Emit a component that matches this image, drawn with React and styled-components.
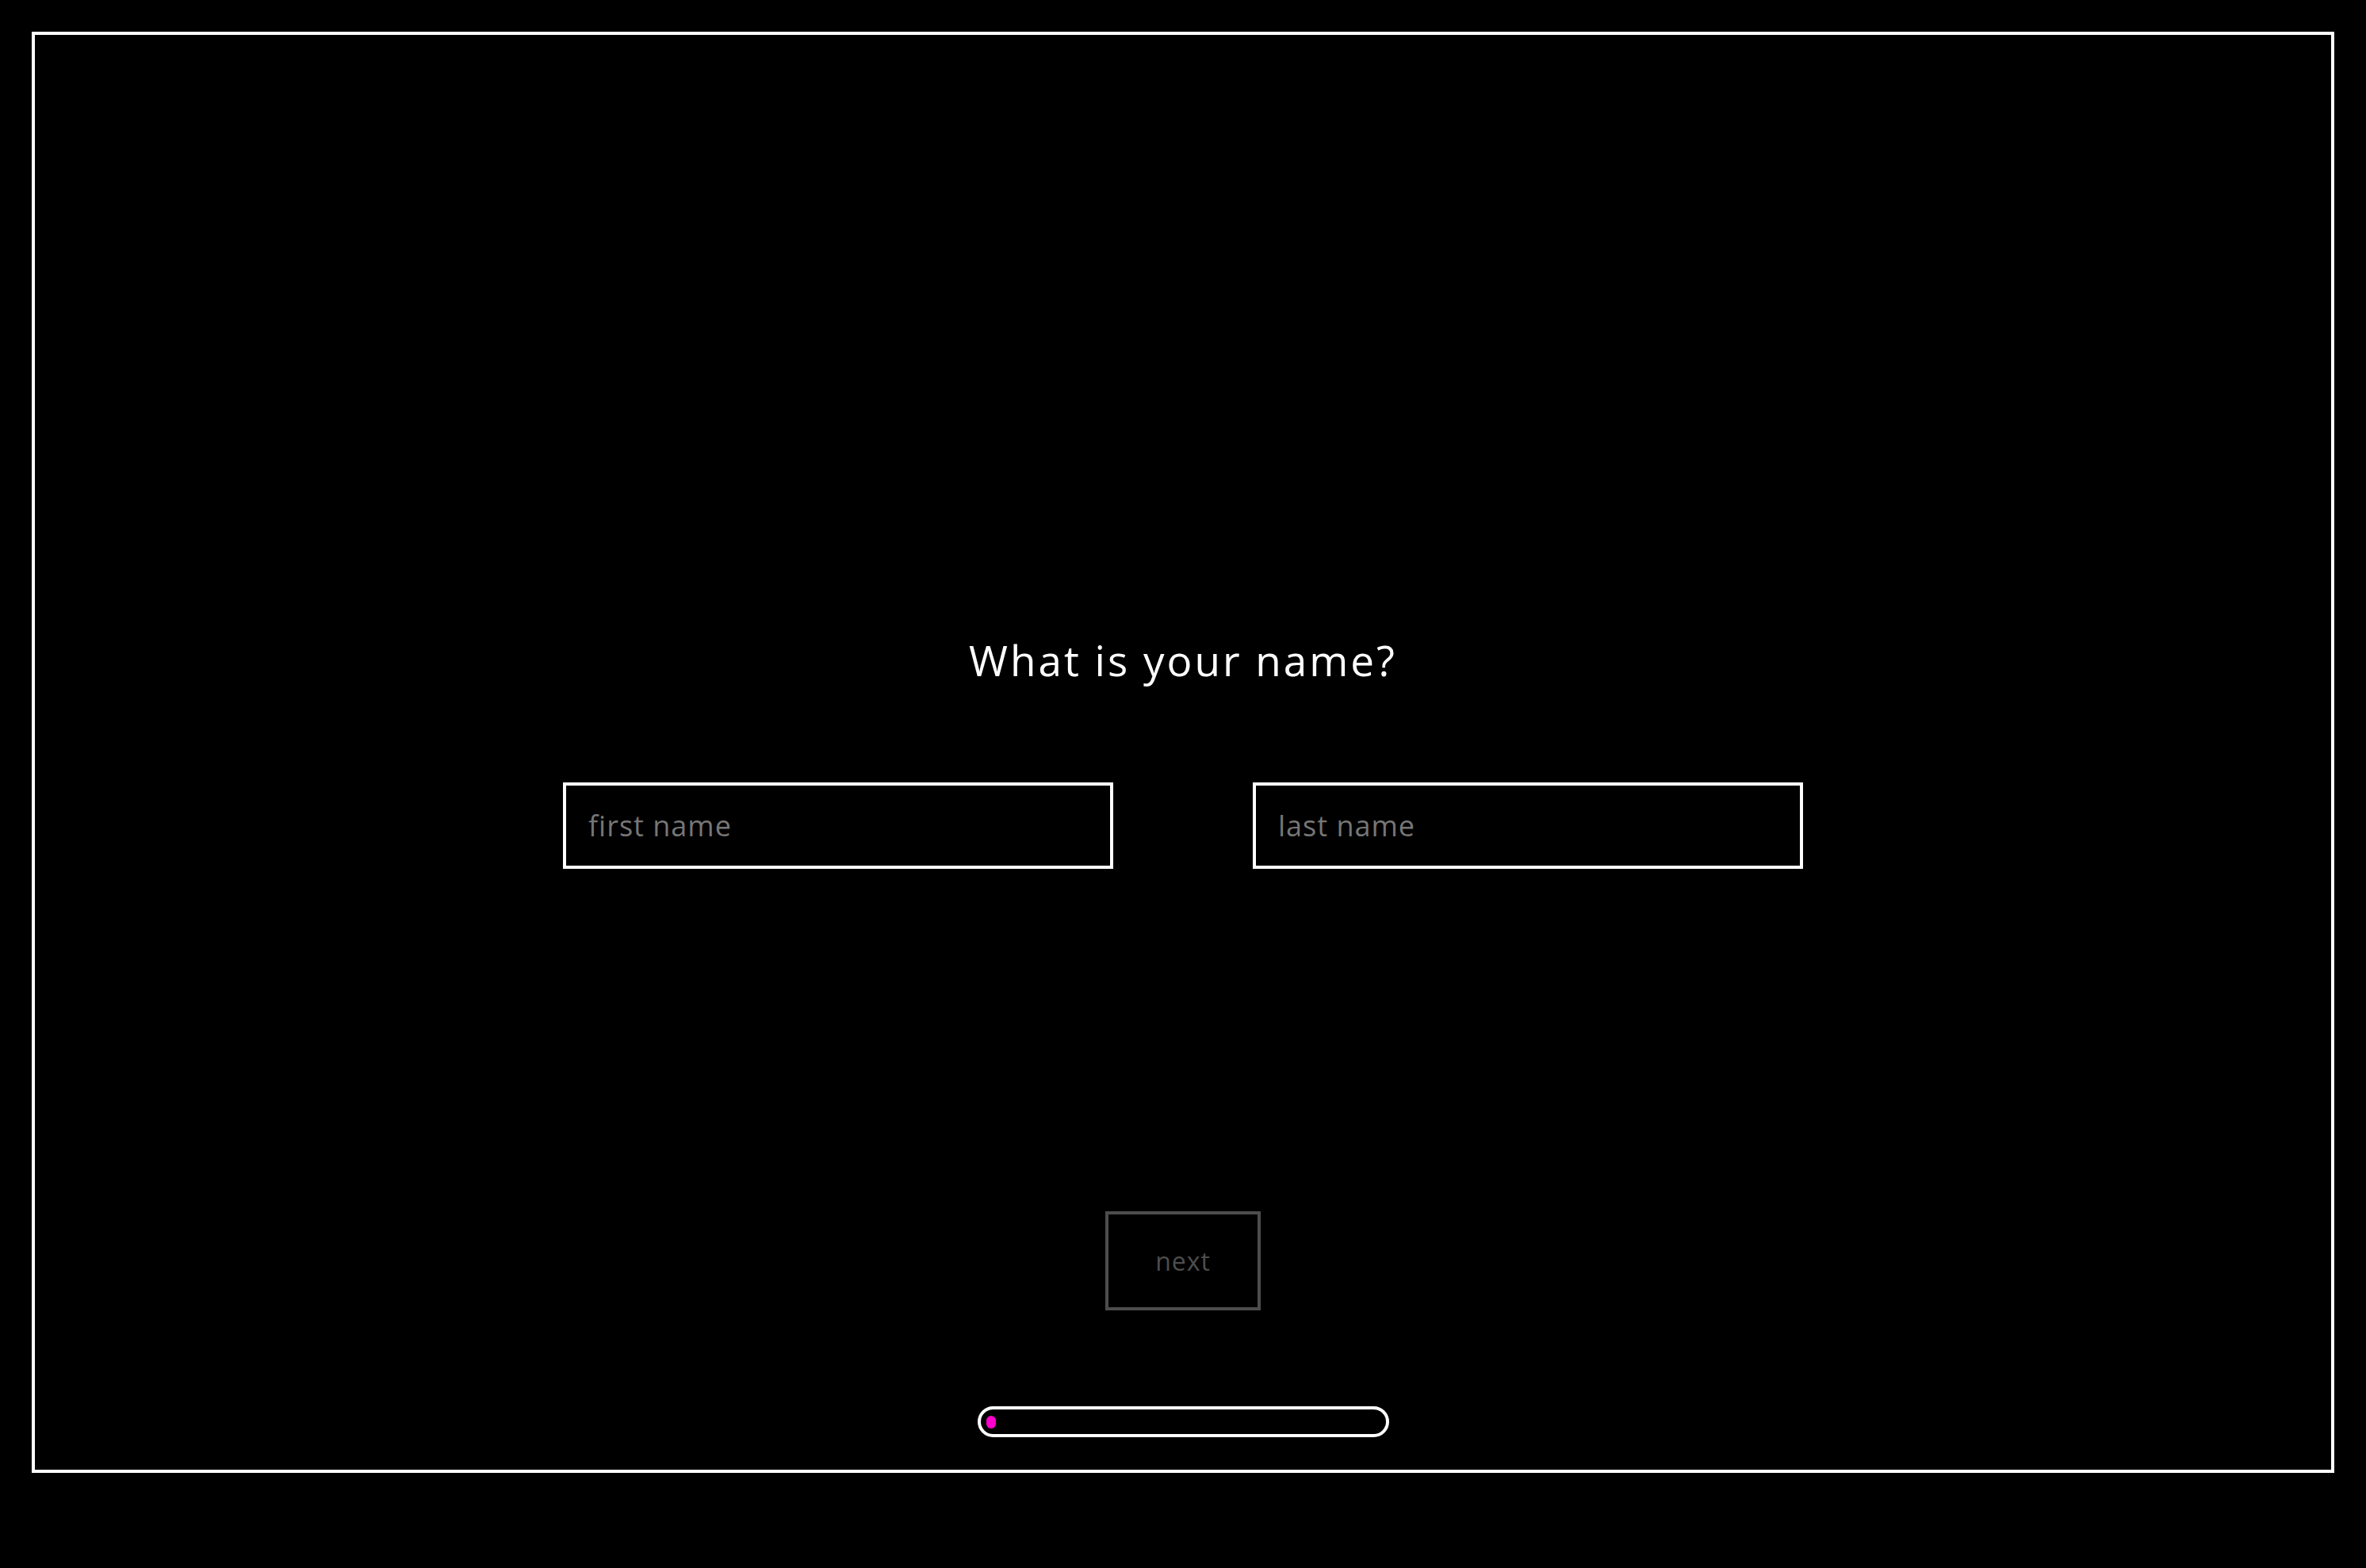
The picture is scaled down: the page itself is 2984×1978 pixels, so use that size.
import React from 'react'
import styled, {createGlobalStyle} from 'styled-components'

const GlobalStyle = createGlobalStyle`
  html, body {
    margin: 0;
    padding: 0;
    background: #000;
  }
  body {
    font-family: "Open Sans", sans-serif;
    color: #fff;
  }
`

const Page = styled.div`
  padding: 40px;
  min-height: 1978px;
  box-sizing: border-box;
`

const Frame = styled.div`
  height: 1818px;
  box-sizing: border-box;
  border: 4px solid #fff;
  display: grid;
  grid-template: 1fr / 1fr;
`

const Question = styled.div`
  grid-area: 1 / 1;
  align-self: center;
  display: flex;
  flex-direction: column;
  align-items: center;
`

const Title = styled.h1`
  margin: 0;
  font-family: "Open Sans", sans-serif;
  font-weight: 400;
  font-size: 53px;
  line-height: 62px;
  letter-spacing: 3px;
  color: #fff;
`

const Fields = styled.div`
  display: flex;
  gap: 176px;
  margin-top: 123px;
`

const TextInput = styled.input`
  width: 694px;
  height: 109px;
  box-sizing: border-box;
  border: 4px solid #fff;
  border-radius: 0;
  background: #000;
  color: #fff;
  padding: 0 28px;
  font-family: "Open Sans", sans-serif;
  font-weight: 400;
  font-size: 36px;
  letter-spacing: 1px;
  outline: none;
  &::placeholder {
    color: #767676;
  }
`

const Footer = styled.div`
  grid-area: 1 / 1;
  align-self: end;
  display: flex;
  flex-direction: column;
  align-items: center;
  padding-bottom: 41px;
`

const NextButton = styled.button`
  width: 196px;
  height: 125px;
  box-sizing: border-box;
  border: 4px solid #4d4d4d;
  border-radius: 0;
  background: #000;
  color: #4d4d4d;
  font-family: "Open Sans", sans-serif;
  font-size: 32px;
  letter-spacing: 1px;
  padding: 0;
  cursor: default;
`

const Progress = styled.div`
  margin-top: 121px;
  width: 519px;
  height: 39px;
  box-sizing: border-box;
  border: 4px solid #fff;
  border-radius: 20px;
  display: flex;
  align-items: center;
  padding-left: 7px;
`

const ProgressFill = styled.div`
  height: 16px;
  border-radius: 6px;
  background: #ff00cc;
`

export default function App() {
  const progress = 0.024
  return (
    <Page>
      <GlobalStyle />
      <Frame>
        <Question>
          <Title>What is your name?</Title>
          <Fields>
            <TextInput placeholder="first name" />
            <TextInput placeholder="last name" />
          </Fields>
        </Question>
        <Footer>
          <NextButton disabled>next</NextButton>
          <Progress>
            <ProgressFill style={{width: `${Math.round(progress * 497)}px`}} />
          </Progress>
        </Footer>
      </Frame>
    </Page>
  )
}
